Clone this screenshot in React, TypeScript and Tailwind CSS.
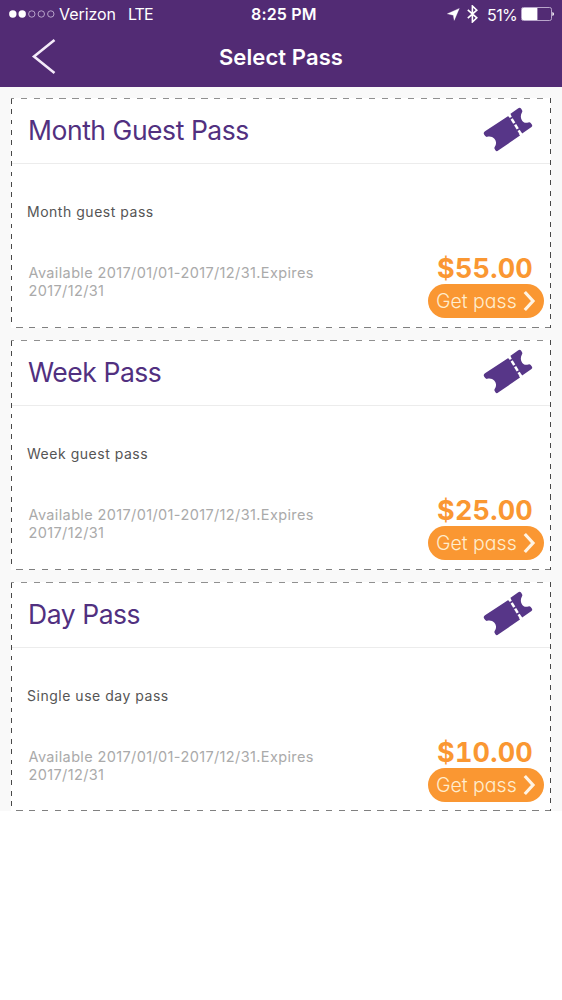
import React from "react";

type Pass = {
  title: string;
  description: string;
  price: string;
};

const passes: Pass[] = [
  { title: "Month Guest Pass", description: "Month guest pass", price: "$55.00" },
  { title: "Week Pass", description: "Week guest pass", price: "$25.00" },
  { title: "Day Pass", description: "Single use day pass", price: "$10.00" },
];

function StatusBar() {
  return (
    <div className="flex h-7 items-center pl-[9px] pr-[6px] text-[16px] leading-7">
      <svg width="46" height="8" viewBox="0 0 46 8" className="mr-[4px] shrink-0">
        <circle cx="3.8" cy="4" r="3.7" fill="#fff" />
        <circle cx="13.2" cy="4" r="3.7" fill="#fff" />
        <circle cx="22.8" cy="4" r="3.2" fill="none" stroke="#cfc0dd" strokeWidth="0.8" />
        <circle cx="32.3" cy="4" r="3.2" fill="none" stroke="#cfc0dd" strokeWidth="0.8" />
        <circle cx="41.8" cy="4" r="3.2" fill="none" stroke="#cfc0dd" strokeWidth="0.8" />
      </svg>
      <span className="w-[69px] shrink-0 tracking-[-0.05px]">Verizon</span>
      <span className="w-[122px] shrink-0 tracking-[-0.9px]">LTE</span>
      <span className="w-[197px] shrink-0 pl-px font-semibold tracking-[0.15px]">8:25 PM</span>
      <svg width="13" height="13" viewBox="0 0 13 13" className="shrink-0">
        <path d="M0.3 5.8 L12.3 0.4 L7.2 12.4 L6.3 7.2 Z" fill="#fff" stroke="#fff" strokeWidth="0.3" />
      </svg>
      <svg width="11" height="18" viewBox="0 0 11 18" className="ml-[7px] shrink-0">
        <path d="M0.8 4.8 L9.8 12.8 L5.4 17 V1 L9.8 5.2 L0.8 13.2" fill="none" stroke="#fff" strokeWidth="1.6" />
      </svg>
      <span className="ml-[9px] w-[34px] shrink-0 pt-px text-[16px] tracking-[-0.6px]">51%</span>
      <svg width="34" height="14" viewBox="0 0 34 14" className="shrink-0">
        <rect x="0.5" y="0.5" width="30" height="13" rx="1.8" fill="none" stroke="#b9a6cb" />
        <path d="M2 1 H16.4 V13 H2 Q1 13 1 12 V2 Q1 1 2 1Z" fill="#fff" />
        <path d="M31.4 5 Q33 5.5 33 7 Q33 8.5 31.4 9Z" fill="#fff" />
      </svg>
    </div>
  );
}

function TicketIcon() {
  return (
    <svg width="52" height="48" viewBox="0 0 52 48" className="relative left-px mt-[7px]">
      <path
        d="M26.3 11 L3 26.3 Q1 27.7 2.1 29.5 L3.2 31.1 Q4.3 32.4 6 31.6 C12.2 30.5 16.2 37 12.8 41.7 Q12 42.9 12.7 44.1 L13.4 45.3 Q14.6 46.8 16.2 45.6 L38 30.5 Z"
        fill="#573688"
      />
      <path
        d="M28.2 8.9 L36.3 3.3 Q37.9 2.2 39 3.6 L40.1 5.3 Q40.8 6.5 39.8 7.7 C36.8 13.1 41.3 19.6 46.2 17.4 Q47.7 16.7 48.7 17.9 L50 19.7 Q50.8 21 49.5 22 L40.2 28.5 Z"
        fill="#573688"
      />
      <path d="M28 11.2 L38.5 28.2" stroke="#573688" strokeWidth="4" fill="none" />
      <path d="M27.1 9.7 L39.3 29.7" stroke="#fff" strokeWidth="2.5" strokeDasharray="3.2 1.7 5 1.7 5 1.7 6" fill="none" />
    </svg>
  );
}

function DashedEdges() {
  return (
    <div className="pointer-events-none absolute inset-0">
      <div className="absolute inset-x-0 top-0 h-px bg-[repeating-linear-gradient(90deg,#909090_0_3px,transparent_3px_9.6px,#909090_9.6px_12.9px)]" />
      <div className="absolute inset-x-0 bottom-0 h-px bg-[repeating-linear-gradient(90deg,transparent_0_5px,#808080_5px_11.5px,transparent_11.5px_12.9px)]" />
      <div className="absolute inset-y-0 left-0 w-px bg-[repeating-linear-gradient(180deg,transparent_0_0.8px,#484848_0.8px_5.6px,transparent_5.6px_10.4px)]" />
      <div className="absolute inset-y-0 right-0 w-px bg-[repeating-linear-gradient(180deg,#484848_0_5px,transparent_5px_10.3px)]" />
    </div>
  );
}

function PassCard({ title, description, price }: Pass) {
  return (
    <section className="relative h-[230px] w-[540px] shrink-0 bg-white text-[#555] last:h-[229px]">
      <DashedEdges />
      <div className="flex h-[66px] items-start justify-between border-b border-[#ececec] pl-[17px] pr-[18px]">
        <h2 className="whitespace-nowrap pt-[14px] text-[26.5px] leading-9 tracking-[-0.45px] text-[#513080]">{title}</h2>
        <TicketIcon />
      </div>
      <p className="mt-[38px] pl-4 text-[14px] leading-5 tracking-[0.52px]">{description}</p>
      <div className="flex justify-between pl-[17.5px] pr-[7px] pt-[31px]">
        <p className="mt-[11px] w-[300px] text-[14.5px] leading-[18px] tracking-[0.37px] text-[#aaa]">
          Available 2017/01/01-2017/12/31.Expires 2017/12/31
        </p>
        <div className="flex w-[116px] flex-col">
          <span className="pr-[11px] text-right text-[27px] font-bold tabular-nums leading-[31px] tracking-[0.2px] text-[#fa9732]">
            {price}
          </span>
          <button className="flex h-[34px] items-center rounded-full bg-[#fa9732] pl-[8px] text-[#ffedce]">
            <span className="w-[87px] whitespace-nowrap text-left text-[19.5px] font-light leading-[34px] [font-feature-settings:'cv11']">
              Get pass
            </span>
            <svg width="14" height="22" viewBox="0 0 14 22">
              <path d="M1.8 2 L10 11 L1.8 20" fill="none" stroke="#fff4e4" strokeWidth="3.2" />
            </svg>
          </button>
        </div>
      </div>
    </section>
  );
}

export default function App() {
  return (
    <div className="min-h-[1000px] w-[562px] bg-white font-['Inter','Liberation_Sans',sans-serif]">
      <header className="h-[87px] bg-[#522b74] text-white">
        <StatusBar />
        <div className="grid h-[59px] grid-cols-[1fr_auto_1fr] items-center">
          <svg width="26" height="38" viewBox="0 0 26 38" className="mb-[3px] ml-[31px]">
            <path d="M23.5 3 L3 19.5 L23.5 36" fill="none" stroke="#f4eaf9" strokeWidth="2.6" />
          </svg>
          <h1 className="text-[22px] font-semibold leading-[59px] tracking-[0.1px]">Select Pass</h1>
          <span />
        </div>
      </header>
      <main className="flex h-[724px] flex-col gap-3 bg-[#f9f9f9] pl-[11px] pt-[11px]">
        {passes.map((pass) => (
          <PassCard key={pass.title} {...pass} />
        ))}
      </main>
    </div>
  );
}
